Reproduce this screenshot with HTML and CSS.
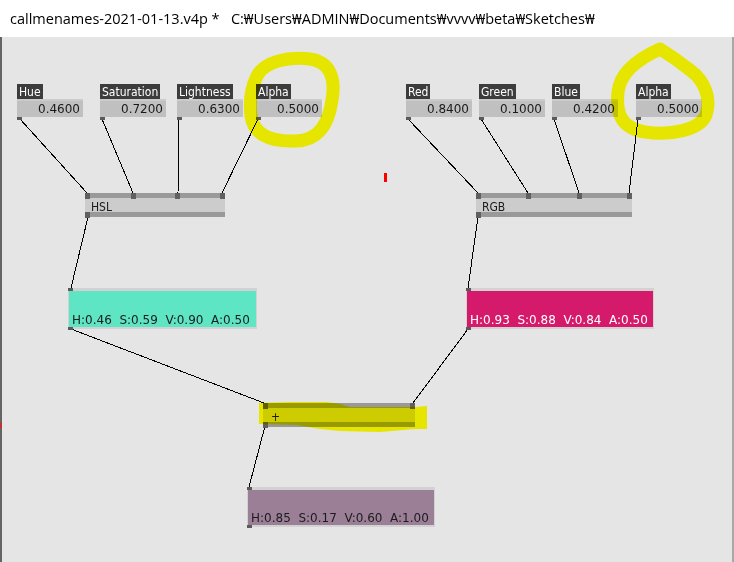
FILE: index.html
```html
<!DOCTYPE html>
<html lang="en">
<head>
    <meta charset="UTF-8">
    <meta name="viewport" content="width=device-width, initial-scale=1.0">
    <title>callmenames-2021-01-13.v4p</title>
    <link rel="stylesheet" href="styles.css">
</head>
<body>
    <div class="titlebar">callmenames-2021-01-13.v4p *   C:₩Users₩ADMIN₩Documents₩vvvv₩beta₩Sketches₩</div>

    <div class="patch">
        <!-- links between pins, drawn in page coordinates -->
        <svg class="wires" width="734" height="525" viewBox="0 37 734 525" shape-rendering="crispEdges">
            <line x1="20" y1="119" x2="87" y2="193"/>
            <line x1="102" y1="119" x2="133" y2="193"/>
            <line x1="179" y1="119" x2="178" y2="193"/>
            <line x1="258" y1="119" x2="222" y2="193"/>
            <line x1="408" y1="119" x2="478" y2="193"/>
            <line x1="481" y1="119" x2="528" y2="193"/>
            <line x1="554" y1="119" x2="579" y2="193"/>
            <line x1="638" y1="119" x2="629" y2="193"/>
            <line x1="88" y1="217" x2="71" y2="288"/>
            <line x1="478" y1="217" x2="468" y2="288"/>
            <line x1="71" y1="329" x2="264" y2="403"/>
            <line x1="468" y1="329" x2="413" y2="403"/>
            <line x1="265" y1="426" x2="249" y2="487"/>
        </svg>

        <!-- HSL inputs -->
        <div class="iobox box-hue">
            <span class="label">Hue</span>
            <div class="value">0.4600</div>
            <span class="pin"></span>
        </div>
        <div class="iobox box-sat">
            <span class="label">Saturation</span>
            <div class="value">0.7200</div>
            <span class="pin"></span>
        </div>
        <div class="iobox box-light">
            <span class="label">Lightness</span>
            <div class="value">0.6300</div>
            <span class="pin"></span>
        </div>
        <div class="iobox box-alpha1">
            <span class="label">Alpha</span>
            <div class="value">0.5000</div>
            <span class="pin"></span>
        </div>

        <!-- RGB inputs -->
        <div class="iobox box-red">
            <span class="label">Red</span>
            <div class="value">0.8400</div>
            <span class="pin"></span>
        </div>
        <div class="iobox box-green">
            <span class="label">Green</span>
            <div class="value">0.1000</div>
            <span class="pin"></span>
        </div>
        <div class="iobox box-blue">
            <span class="label">Blue</span>
            <div class="value">0.4200</div>
            <span class="pin"></span>
        </div>
        <div class="iobox box-alpha2">
            <span class="label">Alpha</span>
            <div class="value">0.5000</div>
            <span class="pin"></span>
        </div>

        <!-- nodes -->
        <div class="node node-hsl">HSL
            <span class="pin in p1"></span>
            <span class="pin in p2"></span>
            <span class="pin in p3"></span>
            <span class="pin in p4"></span>
            <span class="pin out"></span>
        </div>
        <div class="node node-rgb">RGB
            <span class="pin in p1"></span>
            <span class="pin in p2"></span>
            <span class="pin in p3"></span>
            <span class="pin in p4"></span>
            <span class="pin out"></span>
        </div>
        <div class="node node-plus">+
            <span class="pin in p1"></span>
            <span class="pin in p2"></span>
            <span class="pin out"></span>
        </div>

        <!-- colour boxes -->
        <div class="swatch swatch-hsl">
            <span class="readout">H:0.46  S:0.59  V:0.90  A:0.50</span>
            <span class="pin in"></span>
            <span class="pin out"></span>
        </div>
        <div class="swatch swatch-rgb">
            <span class="readout">H:0.93  S:0.88  V:0.84  A:0.50</span>
            <span class="pin in"></span>
            <span class="pin out"></span>
        </div>
        <div class="swatch swatch-sum">
            <span class="readout">H:0.85  S:0.17  V:0.60  A:1.00</span>
            <span class="pin in"></span>
            <span class="pin out"></span>
        </div>

        <span class="cursor"></span>
        <span class="edge-mark"></span>

        <!-- highlighter marks -->
        <svg class="marker" width="734" height="525" viewBox="0 37 734 525">
            <path class="ring" d="M 257 76 C 264 62, 288 56, 310 59 C 330 62, 336 78, 332 100 C 329 122, 320 140, 296 141 C 272 142, 254 136, 251 116 C 249 100, 251 88, 257 76 Z"/>
            <path class="ring" d="M 660 49 C 640 58, 620 72, 618 92 C 616 112, 620 128, 645 132 C 670 136, 700 130, 706 115 C 712 98, 704 80, 690 70 C 680 62, 670 55, 660 49 Z"/>
            <polygon class="blob" points="259,403 290,402 327,402 340,404 350,407 415,407 427,406 427,429 415,429 380,432 340,431 320,429 297,425 259,424"/>
        </svg>
    </div>
</body>
</html>
```

FILE: styles.css
```css
body {
    margin: 0;
    width: 734px;
    height: 562px;
    overflow: hidden;
    background-color: #ffffff;
}
.titlebar {
    box-sizing: border-box;
    height: 37px;
    padding: 9px 0 0 10px;
    font-family: "Open Sans", "Noto Sans", "Noto Sans CJK KR", sans-serif;
    font-size: 14.5px;
    line-height: 20px;
    color: #000000;
    white-space: pre;
}
.patch {
    position: relative;
    height: 525px;
    background-color: #e5e5e5;
    box-shadow: inset 2px 0 #646464, inset -2px 0 #a8a8a8;
    font-family: "DejaVu Sans", sans-serif;
    font-size: 12px;
}
.wires, .marker {
    position: absolute;
    left: 0;
    top: 0;
    pointer-events: none;
}
.wires line {
    stroke: #000000;
    stroke-width: 1;
}
.marker {
    mix-blend-mode: multiply;
}
.marker .ring {
    fill: none;
    stroke: #ffff00;
    stroke-width: 13;
    stroke-linejoin: round;
}
.marker .blob {
    fill: #ffff00;
}

/* value boxes */
.iobox {
    position: absolute;
    top: 47px;
    display: flex;
    flex-direction: column;
    align-items: flex-start;
}
.iobox .label {
    box-sizing: border-box;
    height: 15px;
    padding: 1px 2px 0;
    line-height: 14px;
    font-family: "DejaVu Sans Condensed", "DejaVu Sans", sans-serif;
    background-color: #3c3c3c;
    color: #ffffff;
}
.iobox .value {
    box-sizing: border-box;
    width: 66px;
    height: 18px;
    padding-right: 3px;
    border-top: 2px solid #cbcbcb;
    line-height: 16px;
    text-align: right;
    background-color: #c0c0c0;
    color: #1a1a1a;
}
.iobox .pin {
    width: 5px;
    height: 3px;
    background-color: #5a5a5a;
}
.box-hue { left: 17px; }
.box-sat { left: 100px; }
.box-light { left: 177px; }
.box-alpha1 { left: 256px; }
.box-red { left: 406px; }
.box-green { left: 479px; }
.box-blue { left: 552px; }
.box-alpha2 { left: 636px; }

/* nodes */
.node {
    position: absolute;
    box-sizing: border-box;
    height: 24px;
    padding: 2px 0 0 6px;
    border-top: 5px solid #999999;
    border-bottom: 5px solid #999999;
    line-height: 14px;
    font-family: "DejaVu Sans Condensed", "DejaVu Sans", sans-serif;
    background-color: #cccccc;
    color: #1a1a1a;
}
.node .pin {
    position: absolute;
    width: 5px;
    height: 6px;
    background-color: #606060;
}
.node .in { top: -5px; }
.node .out { left: 0; bottom: -6px; }
.node-hsl { left: 85px; top: 156px; width: 140px; }
.node-hsl .p1 { left: 0; }
.node-hsl .p2 { left: 46px; }
.node-hsl .p3 { left: 90px; }
.node-hsl .p4 { left: 135px; }
.node-rgb { left: 476px; top: 156px; width: 156px; }
.node-rgb .p1 { left: 0; }
.node-rgb .p2 { left: 50px; }
.node-rgb .p3 { left: 101px; }
.node-rgb .p4 { left: 151px; }
.node-plus { left: 263px; top: 366px; width: 152px; padding-left: 8px; }
.node-plus .p1 { left: 0; }
.node-plus .p2 { left: 147px; }

/* colour boxes */
.swatch {
    position: absolute;
    box-sizing: border-box;
    display: flex;
    align-items: flex-end;
    height: 41px;
    padding-left: 3px;
    border: 1px solid #d2d2d2;
    border-top-width: 3px;
    border-bottom-width: 2px;
    line-height: 14px;
    color: #1c1c1c;
}
.swatch .readout {
    white-space: pre;
}
.swatch .pin {
    position: absolute;
    left: -1px;
    width: 5px;
    height: 3px;
    background-color: #5a5a5a;
}
.swatch .in { top: -3px; }
.swatch .out { bottom: -3px; }
.swatch-hsl { left: 68px; top: 251px; width: 189px; background-color: #5de5c4; }
.swatch-rgb { left: 466px; top: 251px; width: 188px; background-color: #d61a6b; color: #ffffff; }
.swatch-sum { left: 247px; top: 450px; width: 188px; height: 40px; background-color: #9b7f97; }

.cursor {
    position: absolute;
    left: 384px;
    top: 136px;
    width: 3px;
    height: 9px;
    background-color: #ff0000;
}
.edge-mark {
    position: absolute;
    left: 0;
    top: 386px;
    width: 2px;
    height: 5px;
    background-color: #c83030;
}
```
